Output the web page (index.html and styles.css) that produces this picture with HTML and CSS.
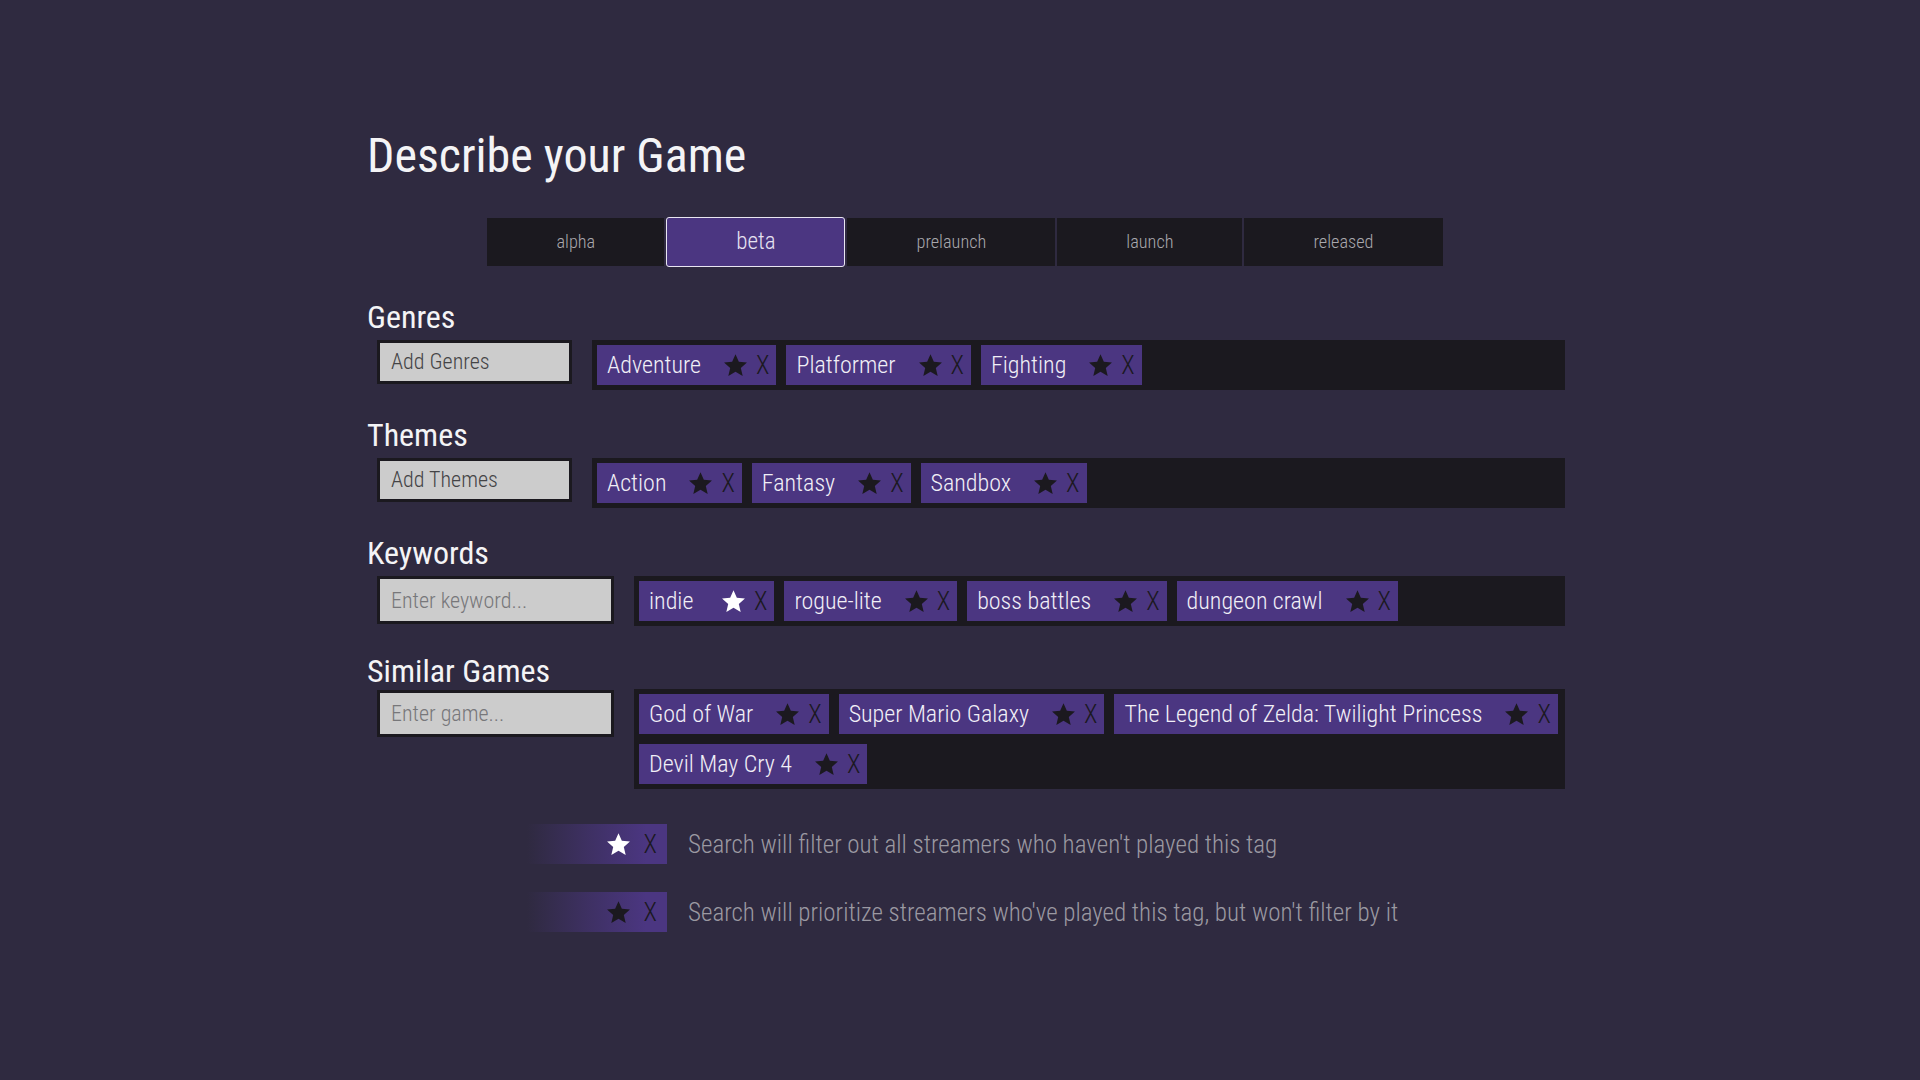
FILE: index.html
```html
<!DOCTYPE html>
<html lang="en">
<head>
<meta charset="utf-8">
<title>Describe your Game</title>
<link rel="stylesheet" href="styles.css">
</head>
<body>
<div class="page">
  <h1 class="title">Describe your Game</h1>

  <div class="stages">
    <div class="stage">alpha</div>
    <div class="stage stage-active">beta</div>
    <div class="stage">prelaunch</div>
    <div class="stage">launch</div>
    <div class="stage">released</div>
  </div>

  <section class="field">
    <h2 class="field-title">Genres</h2>
    <div class="field-row">
      <div class="picker picker-narrow">Add Genres</div>
      <div class="tags">
        <span class="tag"><span class="tag-label">Adventure</span><svg class="star" viewBox="0 0 24 24"><path d="M12 1.2l3.2 7.2 7.8.7-5.9 5.2 1.8 7.7L12 17.9 5.1 22l1.8-7.7L1 9.1l7.8-.7z"/></svg><span class="tag-x">X</span></span>
        <span class="tag"><span class="tag-label">Platformer</span><svg class="star" viewBox="0 0 24 24"><path d="M12 1.2l3.2 7.2 7.8.7-5.9 5.2 1.8 7.7L12 17.9 5.1 22l1.8-7.7L1 9.1l7.8-.7z"/></svg><span class="tag-x">X</span></span>
        <span class="tag"><span class="tag-label">Fighting</span><svg class="star" viewBox="0 0 24 24"><path d="M12 1.2l3.2 7.2 7.8.7-5.9 5.2 1.8 7.7L12 17.9 5.1 22l1.8-7.7L1 9.1l7.8-.7z"/></svg><span class="tag-x">X</span></span>
      </div>
    </div>
  </section>

  <section class="field">
    <h2 class="field-title">Themes</h2>
    <div class="field-row">
      <div class="picker picker-narrow">Add Themes</div>
      <div class="tags">
        <span class="tag"><span class="tag-label">Action</span><svg class="star" viewBox="0 0 24 24"><path d="M12 1.2l3.2 7.2 7.8.7-5.9 5.2 1.8 7.7L12 17.9 5.1 22l1.8-7.7L1 9.1l7.8-.7z"/></svg><span class="tag-x">X</span></span>
        <span class="tag"><span class="tag-label">Fantasy</span><svg class="star" viewBox="0 0 24 24"><path d="M12 1.2l3.2 7.2 7.8.7-5.9 5.2 1.8 7.7L12 17.9 5.1 22l1.8-7.7L1 9.1l7.8-.7z"/></svg><span class="tag-x">X</span></span>
        <span class="tag"><span class="tag-label">Sandbox</span><svg class="star" viewBox="0 0 24 24"><path d="M12 1.2l3.2 7.2 7.8.7-5.9 5.2 1.8 7.7L12 17.9 5.1 22l1.8-7.7L1 9.1l7.8-.7z"/></svg><span class="tag-x">X</span></span>
      </div>
    </div>
  </section>

  <section class="field">
    <h2 class="field-title">Keywords</h2>
    <div class="field-row">
      <input class="entry" type="text" placeholder="Enter keyword...">
      <div class="tags">
        <span class="tag"><span class="tag-label">indie</span><svg class="star star-on" viewBox="0 0 24 24"><path d="M12 1.2l3.2 7.2 7.8.7-5.9 5.2 1.8 7.7L12 17.9 5.1 22l1.8-7.7L1 9.1l7.8-.7z"/></svg><span class="tag-x">X</span></span>
        <span class="tag"><span class="tag-label">rogue-lite</span><svg class="star" viewBox="0 0 24 24"><path d="M12 1.2l3.2 7.2 7.8.7-5.9 5.2 1.8 7.7L12 17.9 5.1 22l1.8-7.7L1 9.1l7.8-.7z"/></svg><span class="tag-x">X</span></span>
        <span class="tag"><span class="tag-label">boss battles</span><svg class="star" viewBox="0 0 24 24"><path d="M12 1.2l3.2 7.2 7.8.7-5.9 5.2 1.8 7.7L12 17.9 5.1 22l1.8-7.7L1 9.1l7.8-.7z"/></svg><span class="tag-x">X</span></span>
        <span class="tag"><span class="tag-label">dungeon crawl</span><svg class="star" viewBox="0 0 24 24"><path d="M12 1.2l3.2 7.2 7.8.7-5.9 5.2 1.8 7.7L12 17.9 5.1 22l1.8-7.7L1 9.1l7.8-.7z"/></svg><span class="tag-x">X</span></span>
      </div>
    </div>
  </section>

  <section class="field field-similar">
    <h2 class="field-title">Similar Games</h2>
    <div class="field-row">
      <input class="entry entry-similar" type="text" placeholder="Enter game...">
      <div class="tags">
        <span class="tag"><span class="tag-label">God of War</span><svg class="star" viewBox="0 0 24 24"><path d="M12 1.2l3.2 7.2 7.8.7-5.9 5.2 1.8 7.7L12 17.9 5.1 22l1.8-7.7L1 9.1l7.8-.7z"/></svg><span class="tag-x">X</span></span>
        <span class="tag"><span class="tag-label">Super Mario Galaxy</span><svg class="star" viewBox="0 0 24 24"><path d="M12 1.2l3.2 7.2 7.8.7-5.9 5.2 1.8 7.7L12 17.9 5.1 22l1.8-7.7L1 9.1l7.8-.7z"/></svg><span class="tag-x">X</span></span>
        <span class="tag"><span class="tag-label">The Legend of Zelda: Twilight Princess</span><svg class="star" viewBox="0 0 24 24"><path d="M12 1.2l3.2 7.2 7.8.7-5.9 5.2 1.8 7.7L12 17.9 5.1 22l1.8-7.7L1 9.1l7.8-.7z"/></svg><span class="tag-x">X</span></span>
        <span class="tag"><span class="tag-label">Devil May Cry 4</span><svg class="star" viewBox="0 0 24 24"><path d="M12 1.2l3.2 7.2 7.8.7-5.9 5.2 1.8 7.7L12 17.9 5.1 22l1.8-7.7L1 9.1l7.8-.7z"/></svg><span class="tag-x">X</span></span>
      </div>
    </div>
  </section>

  <div class="legend">
    <div class="legend-row">
      <div class="swatch"><svg class="star star-on" viewBox="0 0 24 24"><path d="M12 1.2l3.2 7.2 7.8.7-5.9 5.2 1.8 7.7L12 17.9 5.1 22l1.8-7.7L1 9.1l7.8-.7z"/></svg><span class="swatch-x">X</span></div>
      <p class="legend-text">Search will filter out all streamers who haven't played this tag</p>
    </div>
    <div class="legend-row">
      <div class="swatch"><svg class="star" viewBox="0 0 24 24"><path d="M12 1.2l3.2 7.2 7.8.7-5.9 5.2 1.8 7.7L12 17.9 5.1 22l1.8-7.7L1 9.1l7.8-.7z"/></svg><span class="swatch-x">X</span></div>
      <p class="legend-text">Search will prioritize streamers who've played this tag, but won't filter by it</p>
    </div>
  </div>
</div>
</body>
</html>
```
FILE: styles.css
```css
html, body {
  margin: 0;
  background: #2f2a40;
}

body {
  padding: 132px 0 0 10px;
  font-family: "Roboto Condensed", Roboto, "Liberation Sans", sans-serif;
  color: #f2f0f7;
}

.page {
  width: 1200px;
  margin: 0 auto;
}

.title {
  margin: 0;
  padding-left: 2px;
  font-size: 48px;
  line-height: 48px;
  font-weight: 400;
  color: #f4f4f6;
}

/* stage selector */
.stages {
  display: flex;
  justify-content: center;
  gap: 2px;
  margin: 38px 0 35px;
}

.stage {
  height: 48px;
  line-height: 48px;
  padding: 0 69px;
  background: #1b191f;
  color: #a9a8ad;
  font-size: 18.3px;
  font-weight: 300;
}

.stage-active {
  height: 50px;
  line-height: 48px;
  margin: -1px 0;
  padding: 0 69px;
  border: 1px solid #e9e6f2;
  border-radius: 3px;
  background: #4b3681;
  color: #e6e2f1;
  font-size: 23px;
  box-sizing: border-box;
}

/* fields */
.field {
  margin-top: 29px;
}

.field-title {
  margin: 0 0 7px;
  padding-left: 2px;
  font-size: 32px;
  line-height: 32px;
  font-weight: 400;
  color: #f4f4f6;
}

.field-row {
  display: flex;
  align-items: flex-start;
  gap: 20px;
  padding-left: 12px;
}

.picker {
  box-sizing: border-box;
  width: 195px;
  height: 44px;
  padding-left: 11px;
  border: 3px solid #1b191f;
  background: #cccccc;
  color: #444446;
  font-size: 22px;
  font-weight: 300;
  line-height: 37px;
}

.entry {
  box-sizing: border-box;
  flex: none;
  width: 237px;
  height: 48px;
  margin: 0;
  padding: 0 0 0 11px;
  border: 3px solid #1b191f;
  border-radius: 0;
  outline: none;
  background: #cccccc;
  color: #333;
  font-family: "Roboto Condensed", Roboto, sans-serif;
  font-size: 22px;
  font-weight: 300;
}

.entry::placeholder {
  color: #77777a;
  opacity: 1;
}

.field-similar .field-title {
  margin-bottom: 2px;
}

.entry-similar {
  margin-top: 1px;
  height: 47px;
}

.tags {
  flex: 1;
  display: flex;
  flex-wrap: wrap;
  align-content: flex-start;
  min-height: 50px;
  background: #1b191f;
}

.tag {
  display: flex;
  align-items: center;
  height: 40px;
  margin: 5px;
  padding: 0 7px 0 10px;
  background: #4b3681;
  font-size: 24px;
  font-weight: 300;
  color: #f1eff7;
}

.tag-label {
  min-width: 50px;
  margin-right: 22px;
  white-space: nowrap;
}

.star {
  display: block;
  width: 25px;
  height: 25px;
  fill: #1b191f;
}

.star-on {
  fill: #ffffff;
}

.tag-x {
  margin-left: 8px;
  color: #1b191f;
  font-size: 25px;
  font-weight: 300;
}

/* legend */
.legend {
  display: flex;
  flex-direction: column;
  gap: 28px;
  margin: 35px 0 0 162px;
}

.legend-row {
  display: flex;
  align-items: center;
  gap: 21px;
}

.swatch {
  display: flex;
  align-items: center;
  justify-content: flex-end;
  width: 140px;
  height: 40px;
  padding-right: 10px;
  box-sizing: border-box;
  background: linear-gradient(to right, rgba(75, 54, 129, 0) 0%, rgba(75, 54, 129, 0.55) 45%, #4b3681 85%);
}

.swatch-x {
  margin-left: 13px;
  color: #1b191f;
  font-size: 25px;
  font-weight: 300;
}

.legend-text {
  margin: 0;
  font-size: 25px;
  font-weight: 300;
  color: #9b99a2;
}
```
